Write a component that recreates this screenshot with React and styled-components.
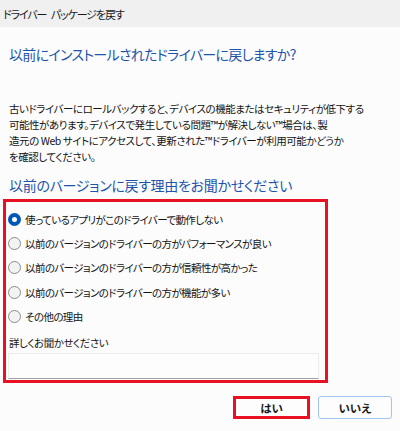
import styled, { createGlobalStyle } from "styled-components";

const GlobalStyle = createGlobalStyle`
  html, body {
    margin: 0;
    padding: 0;
    background: #fcfcfc;
  }
  body {
    font-family: "Noto Sans CJK JP", "Noto Sans", sans-serif;
    font-feature-settings: "palt" 1;
    color: #141414;
  }
`;

const reasons = [
  "使っているアプリがこのドライバーで動作しない",
  "以前のバージョンのドライバーの方がパフォーマンスが良い",
  "以前のバージョンのドライバーの方が信頼性が高かった",
  "以前のバージョンのドライバーの方が機能が多い",
  "その他の理由",
];

export default function App() {
  return (
    <Window>
      <GlobalStyle />
      <TitleBar>ドライバー パッケージを戻す</TitleBar>
      <Content>
        <Heading>以前にインストールされたドライバーに戻しますか?</Heading>
        <Body>
          <Line>古いドライバーにロールバックすると、デバイスの機能またはセキュリティが低下する</Line>
          <Line>可能性があります。デバイスで発生している問題™が解決しない™場合は、製</Line>
          <Line>造元の Web サイトにアクセスして、更新された™ドライバーが利用可能かどうか</Line>
          <Line>を確認してください。</Line>
        </Body>
        <SubHeading>以前のバージョンに戻す理由をお聞かせください</SubHeading>
        <Highlight>
          <RadioList>
            {reasons.map((text, i) => (
              <RadioRow key={text}>
                <Radio $checked={i === 0} />
                <span>{text}</span>
              </RadioRow>
            ))}
          </RadioList>
          <DetailLabel>詳しくお聞かせください</DetailLabel>
          <DetailInput />
        </Highlight>
        <Buttons>
          <Button $marked>はい</Button>
          <Button>いいえ</Button>
        </Buttons>
      </Content>
    </Window>
  );
}

const Window = styled.div`
  width: 400px;
  height: 431px;
  display: flex;
  flex-direction: column;
  background: #fcfcfc;
  overflow: hidden;
`;

const TitleBar = styled.div`
  height: 27px;
  display: flex;
  align-items: center;
  padding-left: 3px;
  background: #f0f0f0;
  font-size: 11px;
  letter-spacing: -1.1px;
  word-spacing: 3px;
  color: #1a1a1a;
`;

const Content = styled.div`
  display: flex;
  flex-direction: column;
`;

const Heading = styled.h1`
  margin: 17px 0 0 9px;
  font-size: 14px;
  letter-spacing: -0.7px;
  line-height: 20px;
  font-weight: 400;
  color: #1d55ad;
  white-space: nowrap;
`;

const Body = styled.div`
  margin: 37px 0 0 9px;
  font-size: 10.5px;
  letter-spacing: -0.45px;
  line-height: 16px;
`;

const Line = styled.div`
  white-space: nowrap;
`;

const SubHeading = styled.h2`
  margin: 10px 0 0 9px;
  font-size: 14px;
  letter-spacing: -0.3px;
  line-height: 20px;
  font-weight: 400;
  color: #1d55ad;
  white-space: nowrap;
`;

const Highlight = styled.div`
  margin: 4px 0 0 3px;
  width: 311px;
  border: 3px solid #e81123;
  padding: 5px 6px 1px 2px;
  display: flex;
  flex-direction: column;
`;

const RadioList = styled.div`
  display: flex;
  flex-direction: column;
`;

const RadioRow = styled.label`
  height: 24.3px;
  display: flex;
  align-items: center;
  gap: 4px;
  font-size: 10.5px;
  letter-spacing: -0.6px;
  white-space: nowrap;
`;

const Radio = styled.span`
  box-sizing: border-box;
  width: 13px;
  height: 13px;
  border-radius: 50%;
  flex: none;
  border: ${(p) => (p.$checked ? "4px solid #0058b5" : "1px solid #8b8b8b")};
  background: ${(p) => (p.$checked ? "#ffffff" : "#f3f3f3")};
`;

const DetailLabel = styled.div`
  margin: 7px 0 0 1px;
  font-size: 10.5px;
  letter-spacing: -0.5px;
  line-height: 16px;
`;

const DetailInput = styled.div`
  margin-top: 2px;
  height: 24px;
  background: #fdfdfd;
  border: 1px solid #ececec;
  border-bottom-color: #a0a0a0;
`;

const Buttons = styled.div`
  margin: 13px 8px 0 0;
  display: flex;
  justify-content: flex-end;
  gap: 8px;
`;

const Button = styled.button`
  box-sizing: border-box;
  height: 23px;
  width: ${(p) => (p.$marked ? "77px" : "74px")};
  padding: 0;
  font-family: inherit;
  font-feature-settings: "palt" 1;
  font-size: 11.5px;
  font-weight: 700;
  color: #1b1b1b;
  background: #fdfdfd;
  border-radius: ${(p) => (p.$marked ? "0" : "3px")};
  border: ${(p) => (p.$marked ? "3px solid #e81123" : "1px solid #9ec6ee")};
`;
